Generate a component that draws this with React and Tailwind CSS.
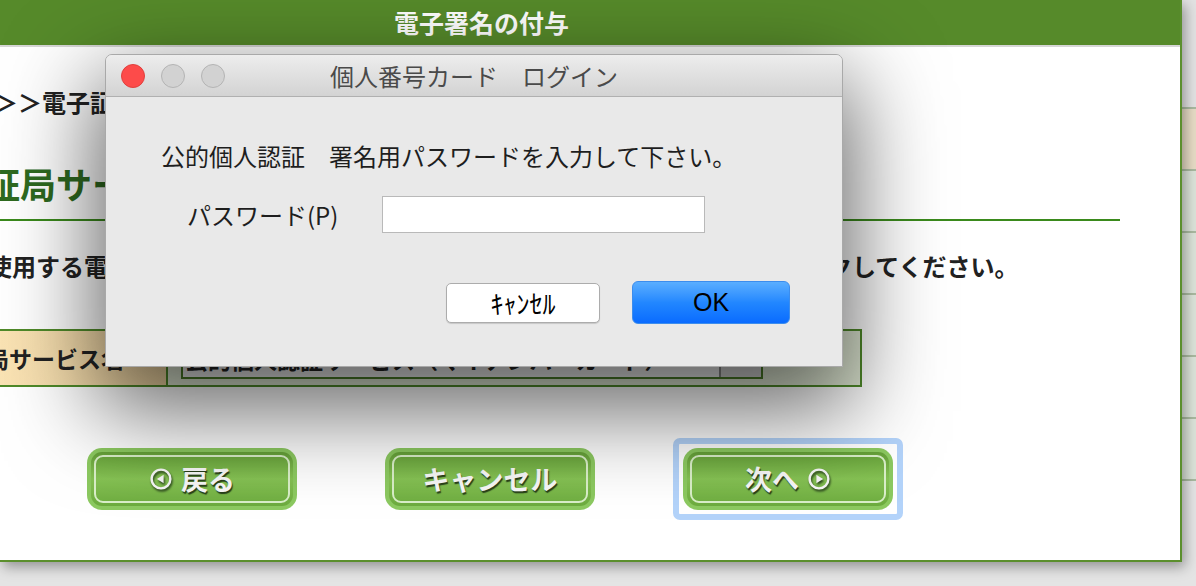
function CircleArrow({ dir }) {
  return (
    <svg width="24" height="24" viewBox="0 0 22 22" className="[filter:drop-shadow(1px_2px_1px_rgba(30,50,20,0.9))]">
      <circle cx="11" cy="11" r="8.6" fill="none" stroke="#f6f6f6" strokeWidth="2.2" />
      {dir === "left" ? (
        <path d="M7.2 11 L13.4 7 L13.4 15 Z" fill="#f6f6f6" />
      ) : (
        <path d="M14.8 11 L8.6 7 L8.6 15 Z" fill="#f6f6f6" />
      )}
    </svg>
  );
}

function GreenButton({ children }) {
  return (
    <div className="w-[210px] h-[62px] shrink-0 rounded-[15px] bg-[#8cc960] p-[4px] flex">
      <div className="flex-1 rounded-[11px] bg-gradient-to-b from-[#65a038] via-[#86c254] to-[#6cab3e] p-[3px] flex">
        <div className="flex-1 rounded-[9px] border-2 border-[#d9eec8] flex items-center justify-center gap-[8px] text-[#f7f7f7] font-bold text-[27px] [text-shadow:1px_2px_1px_rgba(30,50,20,0.9)]">
          {children}
        </div>
      </div>
    </div>
  );
}

export default function App() {
  return (
    <div className="relative w-[1196px] h-[586px] overflow-hidden bg-[#e4e4e4] flex font-['Noto_Sans_CJK_JP',sans-serif]">
      {/* background page window */}
      <div className="relative z-10 w-[1182px] h-[562px] shrink-0 bg-white border-r-2 border-b-2 border-[#5b8f2d] shadow-[3px_5px_12px_rgba(0,0,0,0.35)] overflow-hidden flex flex-col">
        <div className="h-[45px] shrink-0 bg-[#568a2a] flex items-center pl-[394px] text-white font-bold text-[25px] whitespace-nowrap">
          電子署名の付与
        </div>
        <div className="h-[2px] shrink-0 bg-[#d6d6d6]" />

        <div className="mt-[40px] h-[30px] leading-[30px] ml-[-6px] whitespace-nowrap text-[24px] font-bold text-[#222]">
          ＞＞電子証明書の選択
        </div>

        <div className="mt-[44px] h-[44px] leading-[44px] ml-[-52px] whitespace-nowrap text-[36px] font-bold text-[#2e6a1f]">
          認証局サービスの選択
        </div>

        <div className="mt-[14px] h-[2px] w-[1120px] shrink-0 bg-[#3a8a1c]" />

        <div className="mt-[30px] h-[30px] leading-[30px] ml-[-12px] whitespace-nowrap text-[24px] font-bold text-[#222]">
          使用する電子証明書の認証局サービス名を選択のうえ「次へ」ボタンをクリックしてください。
        </div>

        <div className="mt-[48px] h-[58px] w-[862px] shrink-0 flex border-y-2 border-r-2 border-[#4f8a29]">
          <div className="w-[168px] shrink-0 border-r-2 border-[#4f8a29] bg-gradient-to-r from-[#fae3b4] to-[#f1d6a2] overflow-hidden flex items-center">
            <span className="ml-[-60px] whitespace-nowrap text-[23px] font-bold text-[#222]">認証局サービス名</span>
          </div>
          <div className="flex-1 bg-[#e0e9d4] pl-[13px] pt-[8px] flex items-start">
            <div className="w-[582px] h-[40px] border-2 border-[#4b7d27] bg-[#f0f0f0] flex">
              <div className="flex-1 flex items-center pl-[2px] whitespace-nowrap overflow-hidden text-[23px] font-bold text-[#222]">
                公的個人認証サービス（マイナンバーカード）
              </div>
              <div className="w-[42px] border-l-2 border-[#8a8a8a] bg-[#d6d6d6]" />
            </div>
          </div>
        </div>

        <div className="mt-[61px] flex pl-[87px] gap-[88px]">
          <GreenButton>
            <CircleArrow dir="left" />
            <span>戻る</span>
          </GreenButton>
          <GreenButton>
            <span>キャンセル</span>
          </GreenButton>
          <div className="-m-[10px] p-[4px] border-[6px] border-[#b3d3fa] rounded-[7px]">
            <GreenButton>
              <span>次へ</span>
              <CircleArrow dir="right" />
            </GreenButton>
          </div>
        </div>
      </div>

      {/* window behind, right strip */}
      <div className="flex-1 flex flex-col">
        <div className="h-[107px] bg-[#e2e2e2]" />
        <div className="h-[62px] bg-[#e6dbc5] border-t-2 border-[#a9b9a0]" />
        <div className="h-[62px] bg-[#dce3d9] border-t-2 border-[#a9b9a0]" />
        <div className="h-[62px] bg-[#dce3d9] border-t-2 border-[#a9b9a0]" />
        <div className="h-[62px] bg-[#dce3d9] border-t-2 border-[#a9b9a0]" />
        <div className="h-[62px] bg-[#dce3d9] border-t-2 border-[#a9b9a0]" />
        <div className="h-[62px] bg-[#dce3d9] border-t-2 border-[#a9b9a0]" />
        <div className="flex-1 bg-[#e4e4e4] border-t-2 border-[#a9b9a0]" />
      </div>

      {/* dialog */}
      <div className="absolute left-[105px] top-[54px] z-20 w-[738px] h-[313px] rounded-t-[7px] border border-[#a9a9a9] bg-[#e9e9e9] shadow-[0_34px_90px_10px_rgba(0,0,0,0.6)] flex flex-col overflow-hidden">
        <div className="h-[42px] shrink-0 grid grid-cols-[1fr_auto_1fr] items-center bg-gradient-to-b from-[#ededed] to-[#d3d3d3] border-b border-[#b0b0b0]">
          <div className="flex items-center gap-[16px] pl-[15px]">
            <span className="w-[24px] h-[24px] rounded-full bg-[#fd4b4a] border border-[#e0403d]" />
            <span className="w-[24px] h-[24px] rounded-full bg-[#d2d2d2] border border-[#b4b4b4]" />
            <span className="w-[24px] h-[24px] rounded-full bg-[#d2d2d2] border border-[#b4b4b4]" />
          </div>
          <div className="text-[24px] text-[#4a4a4a] whitespace-nowrap leading-none">個人番号カード　ログイン</div>
          <div />
        </div>
        <div className="flex-1 flex flex-col text-[#1e1e1e] text-[24px]">
          <div className="mt-[44px] h-[30px] leading-[30px] pl-[55px] whitespace-nowrap">
            公的個人認証　署名用パスワードを入力して下さい。
          </div>
          <div className="mt-[25px] h-[37px] flex items-center pl-[81px]">
            <div className="w-[195px] whitespace-nowrap">パスワード(P)</div>
            <div className="w-[323px] h-[37px] bg-white border border-[#b9b9b9]" />
          </div>
          <div className="mt-[48px] h-[43px] flex items-center justify-end gap-[32px] pr-[52px]">
            <div className="w-[154px] h-[40px] rounded-[5px] bg-white border border-[#acacac] shadow-[0_1px_1px_rgba(0,0,0,0.15)] flex items-center justify-center text-[26px] text-black leading-none">
              ｷｬﾝｾﾙ
            </div>
            <div className="w-[158px] h-[43px] rounded-[6px] bg-gradient-to-b from-[#5aaeff] via-[#2287ff] to-[#0a6bff] border border-[#3c8ded] flex items-center justify-center font-['Liberation_Sans',sans-serif] text-[25px] text-black leading-none">
              OK
            </div>
          </div>
        </div>
      </div>
    </div>
  );
}
